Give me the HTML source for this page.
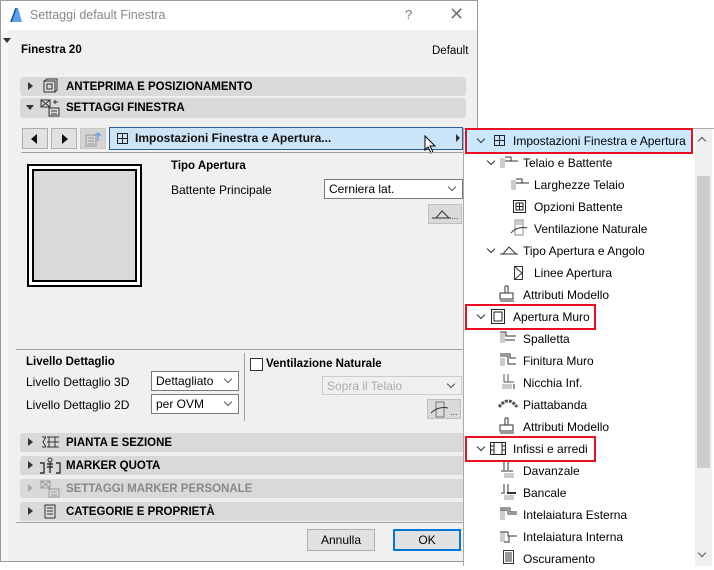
<!DOCTYPE html>
<html><head><meta charset="utf-8"><style>
*{box-sizing:border-box;margin:0;padding:0}
body{width:714px;height:566px;background:#fff;position:relative;overflow:hidden;font-family:"Liberation Sans",sans-serif;font-size:12px;color:#000}
.a{position:absolute;white-space:nowrap}
.hdr{position:absolute;left:20px;width:446px;height:19px;background:#d9d9d9;border-radius:3px;font-weight:bold;font-size:11.5px}
.hdr .t{position:absolute;left:46px;top:4px}
.hdr .tri{position:absolute;left:8px;top:5px;width:0;height:0;border-left:5px solid #333;border-top:4px solid transparent;border-bottom:4px solid transparent}
.hdr .tri.d{left:6px;top:7px;border-top:5px solid #333;border-left:4px solid transparent;border-right:4px solid transparent;border-bottom:0}
.sel{position:absolute;background:#fff;border:1px solid #7a7a7a;padding:2px 4px;font-size:12px}
.sel:after{content:"";position:absolute;right:7px;top:4px;width:5px;height:5px;border-right:1px solid #555;border-bottom:1px solid #555;transform:rotate(45deg)}
.btn{position:absolute;background:#e1e1e1;border:1px solid #adadad}
.row{position:absolute;height:22px;line-height:22px;font-size:12px}
.chev{position:absolute;width:6px;height:6px;border-right:1.5px solid #333;border-bottom:1.5px solid #333;transform:rotate(45deg)}
.red{position:absolute;border:2px solid #e81123}
</style></head><body>
<div class="a" style="left:0;top:0;width:478px;height:562px;background:#f7f7f7;border:1px solid #9a9a9a"></div>
<div class="a" style="left:1px;top:1px;width:476px;height:29px;background:#fff"></div>
<svg class="a" style="left:9px;top:7px" width="14" height="16"><path d="M1 15 L7 1 L9 1 L13 15 Z" fill="#5aa0e8"/><path d="M7 1 L2 15" stroke="#1a4f9c" stroke-width="1.5"/></svg>
<div class="a" style="left:30px;top:8px;color:#888;font-size:12.5px">Settaggi default Finestra</div>
<div class="a" style="left:405px;top:7px;color:#777;font-size:13px">?</div>
<div class="a" style="left:449px;top:4px;color:#777;font-size:18px">✕</div>
<div class="a" style="left:8px;top:30px;width:469px;height:531px;background:#f0f0f0"></div>
<div class="a" style="left:3px;top:38px;border-top:5px solid #333;border-left:4px solid transparent;border-right:4px solid transparent"></div>
<div class="a" style="left:21px;top:44px;font-weight:bold;font-size:11.5px">Finestra 20</div>
<div class="a" style="left:432px;top:45px;font-size:11.5px">Default</div>

<div class="hdr" style="top:77px"><div class="tri"></div><svg class="a" style="left:22px;top:1px" width="16" height="16"><rect x="2" y="3" width="11" height="11" fill="none" stroke="#333"/><rect x="5" y="6" width="5" height="5" fill="none" stroke="#333"/><path d="M2 3 L5 1 L15 1 L15 12 L13 14" fill="none" stroke="#333"/></svg><div class="t">ANTEPRIMA E POSIZIONAMENTO</div></div>
<div class="hdr" style="top:98px;height:20px"><div class="tri d"></div><svg class="a" style="left:20px;top:1px" width="20" height="18"><rect x="1" y="1" width="9" height="7" fill="none" stroke="#333"/><path d="M1 1 L10 8 M10 1 L1 8" stroke="#333"/><rect x="9" y="9" width="10" height="8" fill="none" stroke="#333"/><path d="M11 12h6M11 15h6M13 3h5M15 1v4" stroke="#333"/></svg><div class="t" style="top:4px">SETTAGGI FINESTRA</div></div>

<div class="btn" style="left:22px;top:128px;width:26px;height:21px"><div class="a" style="left:8px;top:5px;border-right:6px solid #111;border-top:5px solid transparent;border-bottom:5px solid transparent"></div></div>
<div class="btn" style="left:51px;top:128px;width:26px;height:21px"><div class="a" style="left:10px;top:5px;border-left:6px solid #111;border-top:5px solid transparent;border-bottom:5px solid transparent"></div></div>
<div class="btn" style="left:80px;top:128px;width:26px;height:21px;background:#d4d4d4;border-color:#c8c8c8"><svg class="a" style="left:4px;top:3px" width="18" height="15"><rect x="1" y="3" width="10" height="11" fill="none" stroke="#999"/><path d="M3 6h6M3 9h6M3 12h6" stroke="#999"/><path d="M13 9 V2 M10 4 L13 1 L16 4" stroke="#6aa6df" fill="none" stroke-width="1.5"/></svg></div>
<div class="a" style="left:109px;top:127px;width:354px;height:23px;background:#cce4f7;border:1px solid #2a6096"></div>
<svg class="a" style="left:117px;top:133px" width="11" height="11"><rect x="0.5" y="0.5" width="10" height="10" fill="none" stroke="#222"/><path d="M5.5 0v11M0 5.5h11" stroke="#222"/></svg>
<div class="a" style="left:135px;top:131px;font-weight:bold;font-size:12px;color:#111">Impostazioni Finestra e Apertura...</div>
<div class="a" style="left:456px;top:134px;border-left:4px solid #333;border-top:4px solid transparent;border-bottom:4px solid transparent"></div>
<svg class="a" style="left:424px;top:135px" width="14" height="20"><path d="M1 1 L1 15 L4 12 L7 18 L9 17 L6 11 L11 11 Z" fill="#fff" stroke="#000"/></svg>
<div class="a" style="left:21px;top:152px;width:442px;height:1px;background:#a0a0a0"></div>

<div class="a" style="left:27px;top:164px;width:115px;height:123px;border:2px solid #000;background:#fff"></div>
<div class="a" style="left:32px;top:169px;width:105px;height:113px;border:2px solid #000;background:#d9d9d9"></div>
<div class="a" style="left:171px;top:160px;font-weight:bold;font-size:11.5px">Tipo Apertura</div>
<div class="a" style="left:171px;top:183px">Battente Principale</div>
<div class="sel" style="left:324px;top:179px;width:139px;height:20px">Cerniera lat.</div>
<div class="btn" style="left:428px;top:204px;width:34px;height:20px;background:#dadada;border-color:#c0c0c0"><svg class="a" style="left:2px;top:3px" width="30" height="12"><path d="M1 10h4 M5 10 L11 3 L18 10 M3 10h17" stroke="#333" fill="none"/><text x="20" y="11" font-size="9" fill="#333">...</text></svg></div>

<div class="a" style="left:16px;top:349px;width:450px;height:1px;background:#a0a0a0"></div>
<div class="a" style="left:26px;top:356px;font-weight:bold;font-size:11.5px">Livello Dettaglio</div>
<div class="a" style="left:26px;top:375px">Livello Dettaglio 3D</div>
<div class="a" style="left:26px;top:398px">Livello Dettaglio 2D</div>
<div class="sel" style="left:151px;top:371px;width:88px;height:20px">Dettagliato</div>
<div class="sel" style="left:151px;top:394px;width:88px;height:20px">per OVM</div>
<div class="a" style="left:244px;top:353px;width:1px;height:68px;background:#a0a0a0"></div>
<div class="a" style="left:250px;top:358px;width:13px;height:13px;border:1px solid #333;background:#fff"></div>
<div class="a" style="left:266px;top:358px;font-weight:bold;font-size:11.5px">Ventilazione Naturale</div>
<div class="sel" style="left:322px;top:376px;width:140px;height:19px;background:#f0f0f0;border-color:#ccc;color:#aaa">Sopra il Telaio</div>
<div class="btn" style="left:427px;top:399px;width:34px;height:20px;background:#dadada;border-color:#c0c0c0"><svg class="a" style="left:2px;top:1px" width="30" height="17"><rect x="6" y="1" width="8" height="15" fill="none" stroke="#777"/><path d="M1 12 Q8 5 18 7" stroke="#333" fill="none"/><text x="20" y="14" font-size="9" fill="#333">...</text></svg></div>

<div class="hdr" style="top:433px"><div class="tri"></div><svg class="a" style="left:21px;top:2px" width="20" height="14"><path d="M1 2h4 M1 12h4 M5 2 L2 7 L5 12 M6 2h12 M8 2v10 M14 2v10 M6 7h12 M6 12h12" stroke="#333" fill="none"/></svg><div class="t">PIANTA E SEZIONE</div></div>
<div class="hdr" style="top:456px"><div class="tri"></div><svg class="a" style="left:19px;top:1px" width="22" height="17"><circle cx="11" cy="3" r="2" fill="none" stroke="#333"/><path d="M11 5v11 M8 7h6 M8 10h6 M1 6h4v10H1 M17 6h4v10h-4" stroke="#333" fill="none" stroke-width="1.4"/></svg><div class="t">MARKER QUOTA</div></div>
<div class="hdr" style="top:479px;color:#888"><div class="tri" style="border-left-color:#aaa"></div><svg class="a" style="left:20px;top:1px" width="20" height="18"><rect x="1" y="1" width="9" height="7" fill="none" stroke="#999"/><path d="M1 1 L10 8 M10 1 L1 8" stroke="#999"/><rect x="9" y="9" width="10" height="8" fill="none" stroke="#999"/><path d="M11 12h6M11 15h6" stroke="#999"/></svg><div class="t">SETTAGGI MARKER PERSONALE</div></div>
<div class="hdr" style="top:502px"><div class="tri"></div><svg class="a" style="left:24px;top:2px" width="13" height="15"><rect x="1" y="1" width="10" height="13" fill="none" stroke="#333"/><path d="M3 4h6M3 7h6M3 10h6" stroke="#333"/></svg><div class="t">CATEGORIE E PROPRIETÀ</div></div>
<div class="a" style="left:16px;top:522px;width:450px;height:1px;background:#a0a0a0"></div>
<div class="btn" style="left:307px;top:529px;width:68px;height:22px;text-align:center;line-height:20px">Annulla</div>
<div class="btn" style="left:393px;top:529px;width:68px;height:22px;text-align:center;line-height:18px;border:2px solid #0078d7">OK</div>

<div class="a" style="left:463px;top:128px;width:251px;height:438px;background:#fff;border-left:1px solid #aaa;border-top:1px solid #aaa"></div>
<div class="a" style="left:695px;top:129px;width:17px;height:437px;background:#f0f0f0"></div>
<div class="a" style="left:697px;top:176px;width:13px;height:292px;background:#cdcdcd"></div>
<div class="a" style="left:699px;top:138px;width:6px;height:6px;border-left:1.5px solid #555;border-top:1.5px solid #555;transform:rotate(45deg)"></div>
<div class="a" style="left:699px;top:550px;width:6px;height:6px;border-right:1.5px solid #555;border-bottom:1.5px solid #555;transform:rotate(45deg)"></div>
<div class="a" style="left:466px;top:130px;width:226px;height:22px;background:#cce8ff"></div>

<div class="chev" style="left:478px;top:136px"></div><svg class="a" style="left:494px;top:135px" width="11" height="11"><rect x="0.5" y="0.5" width="10" height="10" fill="none" stroke="#222"/><path d="M5.5 0v11M0 5.5h11" stroke="#222"/></svg><div class="row" style="left:513px;top:130px">Impostazioni Finestra e Apertura</div>
<div class="chev" style="left:488px;top:158px"></div><svg class="a" style="left:499px;top:156px" width="20" height="13"><rect x="1" y="2" width="5" height="10" fill="#ccc"/><path d="M6 1h6v4h7 M6 5h6" stroke="#333" fill="none"/></svg><div class="row" style="left:523px;top:152px">Telaio e Battente</div>
<svg class="a" style="left:510px;top:178px" width="20" height="13"><rect x="1" y="2" width="5" height="10" fill="#ccc"/><path d="M6 1h6v4h7 M6 5h6" stroke="#333" fill="none"/></svg><div class="row" style="left:534px;top:174px">Larghezze Telaio</div>
<svg class="a" style="left:513px;top:200px" width="13" height="13"><rect x="0.5" y="0.5" width="12" height="12" fill="none" stroke="#222"/><rect x="3" y="3" width="7" height="7" fill="none" stroke="#222"/><path d="M6.5 3v7M3 6.5h7" stroke="#222"/></svg><div class="row" style="left:534px;top:196px">Opzioni Battente</div>
<svg class="a" style="left:510px;top:219px" width="20" height="17"><rect x="5" y="1" width="8" height="15" fill="none" stroke="#888"/><rect x="6" y="2" width="6" height="4" fill="#ccc"/><path d="M1 14 Q7 7 17 9" stroke="#333" fill="none"/></svg><div class="row" style="left:534px;top:218px">Ventilazione Naturale</div>
<div class="chev" style="left:488px;top:246px"></div><svg class="a" style="left:499px;top:244px" width="20" height="12"><path d="M1 10h3 M4 10 L10 3 L17 10 M3 10h16" stroke="#333" fill="none"/></svg><div class="row" style="left:523px;top:240px">Tipo Apertura e Angolo</div>
<svg class="a" style="left:514px;top:266px" width="10" height="14"><rect x="0.5" y="0.5" width="8" height="13" fill="none" stroke="#333"/><path d="M1 1 L8 7 L1 13" stroke="#333" fill="none"/></svg><div class="row" style="left:534px;top:262px">Linee Apertura</div>
<svg class="a" style="left:498px;top:285px" width="18" height="17"><path d="M7 1h3v7 M7 1v7 M2 8h13v6H2z M2 16h14" stroke="#333" fill="none"/></svg><div class="row" style="left:523px;top:284px">Attributi Modello</div>
<div class="chev" style="left:478px;top:312px"></div><svg class="a" style="left:491px;top:309px" width="14" height="15"><rect x="0.5" y="0.5" width="13" height="14" fill="none" stroke="#222"/><rect x="3" y="3" width="8" height="9" fill="none" stroke="#222"/></svg><div class="row" style="left:513px;top:306px">Apertura Muro</div>
<svg class="a" style="left:499px;top:331px" width="20" height="14"><rect x="1" y="2" width="5" height="10" fill="#ccc"/><path d="M1 1h6v4h10 M6 9h10" stroke="#333" fill="none"/></svg><div class="row" style="left:523px;top:328px">Spalletta</div>
<svg class="a" style="left:499px;top:353px" width="20" height="14"><rect x="1" y="5" width="5" height="8" fill="#ccc"/><path d="M1 1h10v4h6 M1 3h8v8h8" stroke="#333" fill="none"/></svg><div class="row" style="left:523px;top:350px">Finitura Muro</div>
<svg class="a" style="left:499px;top:373px" width="20" height="17"><path d="M5 1v8 M9 1v8 M5 9h10" stroke="#555" fill="none"/><rect x="3" y="11" width="10" height="5" fill="#ccc"/><path d="M15 11v5" stroke="#333"/></svg><div class="row" style="left:523px;top:372px">Nicchia Inf.</div>
<svg class="a" style="left:497px;top:398px" width="22" height="10"><path d="M2 9 Q11 -3 20 9" stroke="#555" fill="none" stroke-width="3" stroke-dasharray="3 1"/></svg><div class="row" style="left:523px;top:394px">Piattabanda</div>
<svg class="a" style="left:498px;top:417px" width="18" height="17"><path d="M7 1h3v7 M7 1v7 M2 8h13v6H2z M2 16h14" stroke="#333" fill="none"/></svg><div class="row" style="left:523px;top:416px">Attributi Modello</div>
<div class="chev" style="left:478px;top:444px"></div><svg class="a" style="left:490px;top:442px" width="16" height="13"><rect x="0.5" y="0.5" width="15" height="12" fill="none" stroke="#222"/><path d="M4 0v13M12 0v13M1 4h3M1 8h3M12 4h3M12 8h3" stroke="#222"/></svg><div class="row" style="left:513px;top:438px">Infissi e arredi</div>
<svg class="a" style="left:499px;top:461px" width="20" height="17"><path d="M5 1v8 M9 1v8 M2 10h12" stroke="#333" fill="none"/><rect x="5" y="12" width="10" height="5" fill="#ccc"/></svg><div class="row" style="left:523px;top:460px">Davanzale</div>
<svg class="a" style="left:499px;top:483px" width="20" height="17"><path d="M5 1v8 M9 1v8 M2 10h4" stroke="#333" fill="none"/><rect x="8" y="9" width="9" height="2" fill="#333"/><rect x="5" y="12" width="10" height="5" fill="#ccc"/></svg><div class="row" style="left:523px;top:482px">Bancale</div>
<svg class="a" style="left:499px;top:507px" width="20" height="15"><rect x="1" y="3" width="5" height="10" fill="#ccc"/><path d="M1 1h10v4h7 M1 3h8v4h9" stroke="#333" fill="none"/></svg><div class="row" style="left:523px;top:504px">Intelaiatura Esterna</div>
<svg class="a" style="left:499px;top:529px" width="20" height="15"><rect x="1" y="3" width="5" height="10" fill="#ccc"/><path d="M1 3h8v4h9 M5 13h5v-6" stroke="#333" fill="none"/></svg><div class="row" style="left:523px;top:526px">Intelaiatura Interna</div>
<svg class="a" style="left:503px;top:550px" width="12" height="14"><rect x="0.5" y="0.5" width="10" height="13" fill="none" stroke="#333"/><path d="M2 3h7M2 5h7M2 7h7M2 9h7M2 11h7" stroke="#333"/></svg><div class="row" style="left:523px;top:548px">Oscuramento</div>

<div class="red" style="left:465px;top:128px;width:228px;height:26px"></div>
<div class="red" style="left:465px;top:304px;width:131px;height:26px"></div>
<div class="red" style="left:465px;top:436px;width:131px;height:26px"></div>
</body></html>
